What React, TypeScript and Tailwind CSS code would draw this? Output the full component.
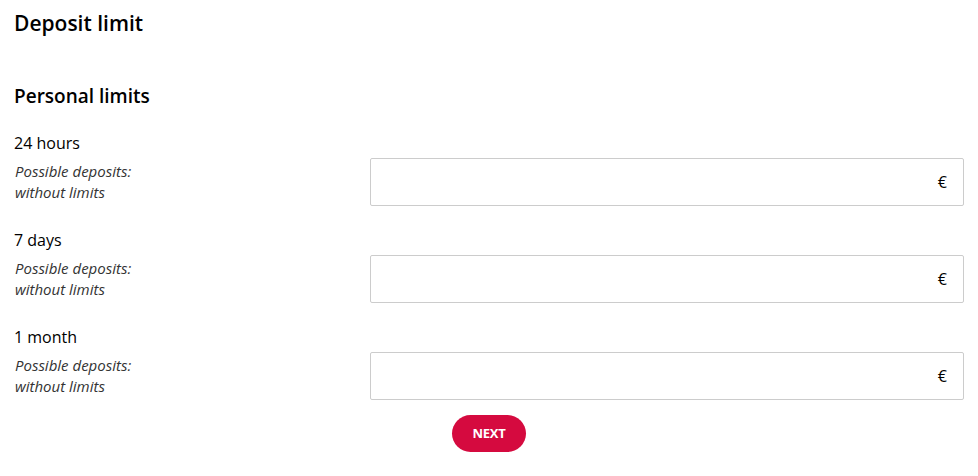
import React from "react";

const rows = ["24 hours", "7 days", "1 month"];

export default function App() {
  return (
    <div className="bg-white min-h-[476px] px-[14px] text-black" style={{ fontFamily: '"Open Sans", sans-serif' }}>
      <h1 className="text-[21px] font-semibold leading-[28px] pt-[9px]">Deposit limit</h1>
      <h2 className="text-[19px] font-semibold leading-[26px] mt-[46px]">Personal limits</h2>
      <div className="mt-[23px] flex flex-col gap-[23px]">
        {rows.map((r) => (
          <div key={r}>
            <div className="text-[16px] leading-[22px]">{r}</div>
            <div className="flex mt-[4px]">
              <div className="w-[356px] italic text-[15px] leading-[21px] text-[#333] pt-[3px] pl-[1px]">
                <div>Possible deposits:</div>
                <div>without limits</div>
              </div>
              <div className="flex-1 h-[48px] border border-[#cccccc] rounded-[2px] flex items-center justify-end pr-[16px] text-[16px]">
                €
              </div>
            </div>
          </div>
        ))}
      </div>
      <div className="flex justify-center mt-[15px]">
        <button className="h-[37px] w-[74px] rounded-full bg-[#d50a3f] text-white text-[13px] font-bold tracking-[-0.3px]">
          NEXT
        </button>
      </div>
    </div>
  );
}
